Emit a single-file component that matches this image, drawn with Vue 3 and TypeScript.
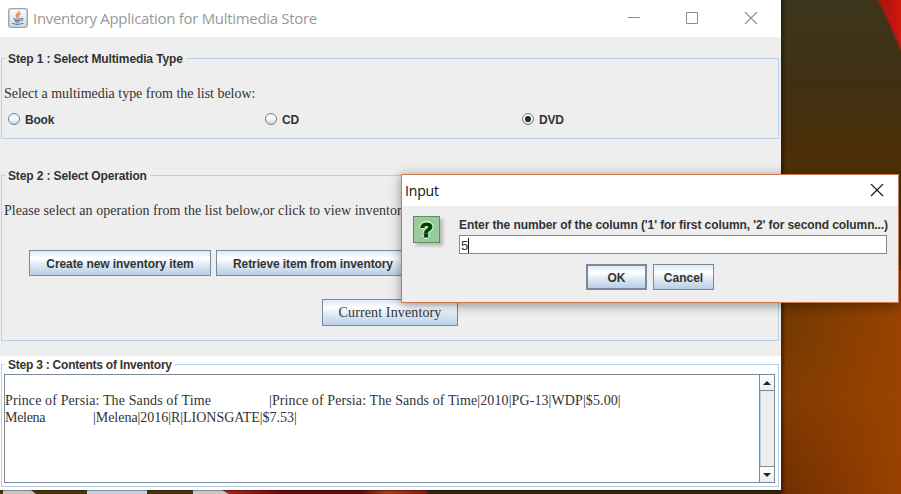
<script setup lang="ts">
import { ref } from 'vue'

const types = ['Book', 'CD', 'DVD']
const selected = ref('DVD')
const column = ref('5')
const operations = ['Create new inventory item', 'Retrieve item from inventory']
</script>

<template>
  <main class="desktop">
    <svg class="wallpaper" width="901" height="494" viewBox="0 0 901 494" aria-hidden="true">
      <defs>
        <linearGradient id="wall" x1="0" y1="0" x2="0" y2="1">
          <stop offset="0" stop-color="#3c361c" />
          <stop offset=".17" stop-color="#403013" />
          <stop offset=".31" stop-color="#4b2e07" />
          <stop offset=".62" stop-color="#703900" />
          <stop offset=".8" stop-color="#813b00" />
          <stop offset="1" stop-color="#722f00" />
        </linearGradient>
        <linearGradient id="glow" x1="0" y1="0" x2="1" y2="0">
          <stop offset="0" stop-color="#a04400" stop-opacity="0" />
          <stop offset="1" stop-color="#a04400" stop-opacity=".85" />
        </linearGradient>
        <linearGradient id="red" x1="0" y1="0" x2="1" y2="0">
          <stop offset="0" stop-color="#a31309" />
          <stop offset="1" stop-color="#d71b12" />
        </linearGradient>
        <linearGradient id="shade" x1="0" y1="0" x2="1" y2="0">
          <stop offset="0" stop-color="#000" stop-opacity=".4" />
          <stop offset="1" stop-color="#000" stop-opacity="0" />
        </linearGradient>
        <linearGradient id="strip" x1="0" y1="0" x2="1" y2="0">
          <stop offset="0" stop-color="#b52010" />
          <stop offset=".3" stop-color="#6c0807" />
          <stop offset=".68" stop-color="#6c0807" />
          <stop offset=".8" stop-color="#a83a12" />
          <stop offset="1" stop-color="#8f1504" />
        </linearGradient>
        <filter id="soft"><feGaussianBlur stdDeviation="1.2" /></filter>
      </defs>
      <rect width="901" height="494" fill="url(#wall)" />
      <rect x="785" y="270" width="116" height="224" fill="url(#glow)" />
      <path d="M876-4 889 23 905 59V-4z" fill="url(#red)" filter="url(#soft)" />
      <rect x="781" width="5" height="494" fill="url(#shade)" />
      <g>
        <rect y="490" width="440" height="4" fill="#493409" />
        <path d="M3 490H31L36 494H3zM193 490H222L229 494H193z" fill="#c9c5c2" />
        <rect x="87" y="490" width="60" height="4" fill="#c4d2df" />
        <path d="M223 490H427V494H230z" fill="url(#strip)" />
        <rect x="427" y="490" width="354" height="4" fill="#362506" />
        <rect y="490" width="781" height="1" fill="#000" opacity=".3" />
      </g>
    </svg>

    <section class="window">
      <header class="titlebar">
        <svg class="java" width="20" height="20" viewBox="0 0 20 20">
          <defs>
            <linearGradient id="tile" x1="0" y1="0" x2="0" y2="1">
              <stop offset="0" stop-color="#fafbfc" /><stop offset="1" stop-color="#d3dde6" />
            </linearGradient>
          </defs>
          <rect x=".8" y=".8" width="18.4" height="18.4" rx="1.6" fill="url(#tile)" stroke="#7b8b9b" stroke-width="1.1" />
          <path d="M10.9 2.9C12 5.6 7.2 6.1 8.4 8.4L9.5 9.8M12.8 5.6C10 6.5 9.8 7.6 10.9 9.4" fill="none" stroke="#e58a4b" stroke-width="1.5" />
          <path d="M5.3 10.8Q9 11.7 13 10.8M6.2 12.3Q9 13.2 12.2 12.3M7 13.8Q9.5 14.4 11.7 13.8M13.2 10.4Q16.6 10.5 12.8 13M4 15.3Q9 17.4 15.4 15.2" fill="none" stroke="#557b9d" stroke-width="1.1" />
        </svg>
        <span class="caption">Inventory Application for Multimedia Store</span>
        <svg class="controls" width="132" height="14" viewBox="0 0 132 14" fill="none" stroke="#8c8c8c">
          <path d="M0 5.5H12M58.5 .5H69.5V11.5H58.5z" />
          <path d="M117 0 129 12M129 0 117 12" stroke-width="1.1" />
        </svg>
      </header>

      <div class="content">
        <section class="panel step1">
          <h2 class="t1">Step 1 : Select Multimedia Type</h2>
          <p class="serif p1">Select a multimedia type from the list below:</p>
          <div class="radios">
            <label v-for="t in types" :key="t" class="radio" @click="selected = t">
              <svg width="12" height="12" viewBox="0 0 12 12">
                <defs>
                  <linearGradient id="dot" x1="0" y1="0" x2="0" y2="1">
                    <stop offset="0" stop-color="#e4edf5" /><stop offset=".4" stop-color="#fff" /><stop offset="1" stop-color="#c0d4e6" />
                  </linearGradient>
                </defs>
                <circle cx="6" cy="6" r="5.5" fill="url(#dot)" stroke="#73828f" />
                <circle v-if="selected === t" cx="6" cy="6" r="3" fill="#2b2b2b" />
              </svg>
              <span>{{ t }}</span>
            </label>
          </div>
        </section>

        <section class="panel step2">
          <h2 class="t2">Step 2 : Select Operation</h2>
          <p class="serif p2">Please select an operation from the list below,or click to view inventory</p>
          <div class="operations">
            <button v-for="(o, i) in operations" :key="o" class="btn" :class="'op' + i">{{ o }}</button>
          </div>
          <button class="btn current">Current Inventory</button>
        </section>

        <div class="white">
          <section class="panel step3">
            <h2 class="t3">Step 3 : Contents of Inventory</h2>
            <div class="area">
              <div class="listing serif">
                <div class="row"><span class="name1">Prince of Persia: The Sands of Time</span><span class="rest1">|Prince of Persia: The Sands of Time|2010|PG-13|WDP|$5.00|</span></div>
                <div class="row"><span class="name2">Melena</span><span class="rest2">|Melena|2016|R|LIONSGATE|$7.53|</span></div>
              </div>
              <div class="scrollbar">
                <div class="arrow"><svg width="8" height="4" viewBox="0 0 8 4"><path d="M0 4 4 0 8 4z" fill="#222" /></svg></div>
                <div class="track"></div>
                <div class="arrow down"><svg width="8" height="4" viewBox="0 0 8 4"><path d="M0 0 4 4 8 0z" fill="#222" /></svg></div>
              </div>
            </div>
          </section>
        </div>
      </div>
    </section>

    <section class="dialog" role="dialog">
      <header class="dialog-title">
        <span>Input</span>
        <svg width="14" height="14" viewBox="0 0 14 14" stroke="#111" stroke-width="1.1"><path d="M1 0 13 12M13 0 1 12" /></svg>
      </header>
      <div class="dialog-body">
        <div class="question"><span>?</span></div>
        <div class="form">
          <label class="prompt">Enter the number of the column ('1' for first column, '2' for second column...)</label>
          <div class="field"><span>{{ column }}</span><i class="caret"></i></div>
          <div class="actions">
            <button class="btn ok">OK</button>
            <button class="btn cancel">Cancel</button>
          </div>
        </div>
      </div>
    </section>
  </main>
</template>

<style>
body { margin: 0; overflow: hidden; }
</style>

<style scoped>
.desktop { position: relative; width: 901px; height: 494px; overflow: hidden; font-family: "Liberation Sans", Arial, sans-serif; color: #333; }
.desktop * { box-sizing: border-box; }
.wallpaper { position: absolute; inset: 0; }
.window { position: relative; display: flex; flex-direction: column; width: 781px; height: 490px; background: #eee; }
.titlebar { display: flex; align-items: center; height: 37px; padding: 0 21px 0 8px; background: #fff; }
.java { margin-bottom: 2px; }
.controls { margin-top: 1px; }
.caption { flex: 1; margin: -1px 0 0 5px; font: 15px/20px "Open Sans", "Noto Sans", sans-serif; letter-spacing: -.31px; color: #999; white-space: nowrap; }
.content { display: flex; flex: 1; flex-direction: column; padding-top: 21px; }
.panel { display: flex; flex-direction: column; margin: 0 2px 0 1px; border: 1px solid #b8cfe5; }
h2 { align-self: flex-start; height: 16px; margin: -8px 0 0 3px; padding: 0 3px; background: #eee; font-size: 12px; line-height: 16px; white-space: nowrap; }
.t1 { letter-spacing: -.12px; }
.t2 { letter-spacing: -.13px; }
.t3 { letter-spacing: -.23px; }
p { margin: 0; }
.serif { font-family: "Liberation Serif", "Times New Roman", serif; font-size: 14px; line-height: 17px; white-space: pre; }
.step1 { height: 81px; }
.p1 { margin: 18px 0 0 2px; letter-spacing: -.02px; }
.radios { display: grid; grid-template-columns: 257px 257px 1fr; margin: 10px 0 0 6px; }
.radio { display: flex; align-items: center; gap: 5px; font-size: 12px; font-weight: bold; letter-spacing: -.2px; line-height: 16px; }
.radio svg { margin-bottom: 2px; }
.step2 { height: 166px; margin-top: 36px; }
.p2 { margin: 18px 0 0 2px; letter-spacing: .05px; }
.operations { display: flex; gap: 5px; margin: 31px 0 0 27px; }
.btn { height: 26px; padding: 2px 0 0; border: 1px solid #7a8a99; background: linear-gradient(#dde8f3 0, #fff 30%, #dde8f3 60%, #b8cfe5); color: #333; font: bold 12px/22px "Liberation Sans", Arial, sans-serif; white-space: nowrap; }
.op0 { width: 182px; letter-spacing: -.08px; }
.op1 { width: 194px; letter-spacing: -.1px; }
.current { width: 136px; height: 27px; margin: 23px 0 0 320px; padding: 0; font: 14px/23px "Liberation Serif", "Times New Roman", serif; letter-spacing: .13px; }
.white { flex: 1; margin-top: 15px; padding-top: 8px; background: #fff; }
.step3 { height: 123px; }
.step3 h2 { background: #fff; }
.area { display: flex; width: 771px; height: 109px; margin: 1px 0 0 2px; border: 1px solid #7a8a99; }
.listing { flex: 1; padding-top: 17px; }
.row { display: flex; height: 17px; }
.name1 { width: 264px; letter-spacing: .12px; }
.rest1 { letter-spacing: .1px; }
.name2 { width: 88px; letter-spacing: -.3px; }
.rest2 { letter-spacing: -.03px; }
.scrollbar { display: flex; flex-direction: column; width: 15px; border-left: 1px solid #7a8a99; background: #eee; }
.arrow { display: flex; align-items: center; justify-content: center; height: 16px; border-bottom: 1px solid #7a8a99; background: linear-gradient(#fff, #e9edf1); }
.down { border-bottom: 0; border-top: 1px solid #7a8a99; }
.track { flex: 1; border-left: 1px solid #b8cfe5; }
.dialog { position: absolute; left: 401px; top: 174px; width: 498px; height: 129px; border: 1px solid #d07a50; background: #eee; box-shadow: 0 2px 11px rgba(0,0,0,.42); }
.dialog-title { display: flex; align-items: center; justify-content: space-between; height: 31px; padding: 0 14px 0 3px; background: #fff; color: #111; font: 14px/20px "Open Sans", "Noto Sans", sans-serif; letter-spacing: -.15px; }
.dialog-body { display: flex; gap: 19px; padding: 10px 0 0 11px; }
.question { width: 27px; height: 27px; border: 1px solid #668866; background: #99cc99; box-shadow: 3px 3px 3px #bbb; color: #063c06; font-size: 21px; font-weight: bold; line-height: 25px; text-align: center; text-shadow: 0 0 1px #cfc, 2px 0 #cfc, -2px 0 #cfc, 0 2px #cfc, 0 -2px #cfc; -webkit-text-stroke: 1.2px #063c06; }
.form { width: 430px; }
.prompt { display: block; height: 19px; font-size: 12px; font-weight: bold; letter-spacing: -.09px; line-height: 18px; white-space: nowrap; }
.field { display: flex; align-items: center; width: 428px; height: 19px; padding: 1px 0 0 1px; border: 1px solid #7a8a99; background: #fff; font-size: 13px; }
.caret { width: 1px; height: 15px; background: #111; }
.actions { display: flex; gap: 6px; margin: 10px 0 0 127px; }
.ok { width: 61px; padding-top: 1px; border-width: 2px; }
.cancel { width: 61px; }
</style>
